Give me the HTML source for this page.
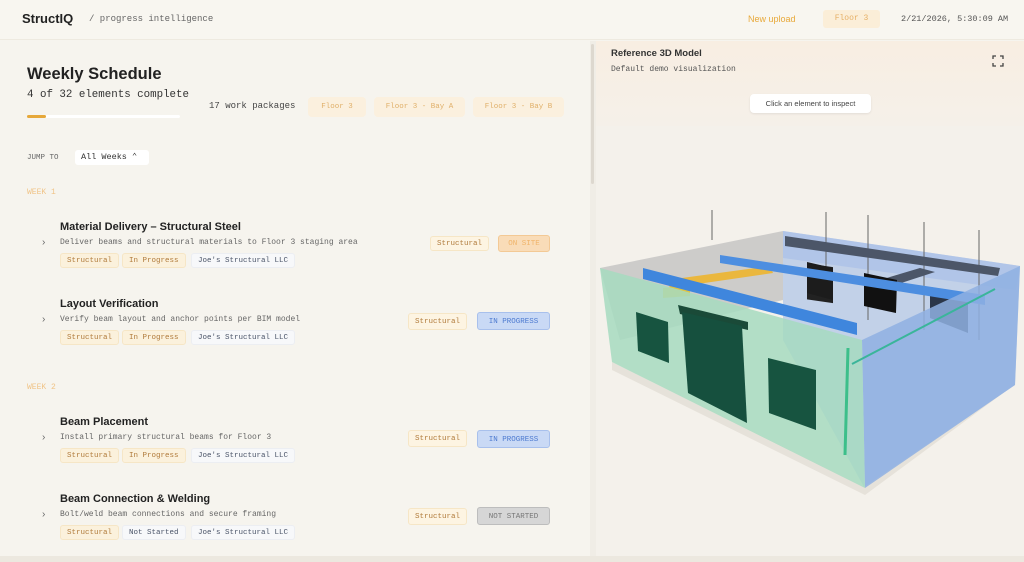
<!DOCTYPE html>
<html><head><style>
*{margin:0;padding:0;box-sizing:border-box}
body{width:1024px;height:562px;overflow:hidden;background:#f6f4ee;font-family:"Liberation Sans",sans-serif;position:relative;color:#222}
.a{position:absolute;white-space:nowrap}
.m{font-family:"Liberation Mono",monospace}
.tag{position:absolute;height:15px;line-height:15px;padding:0 6px;font-family:"Liberation Mono",monospace;font-size:7.5px;border-radius:3px}
.ty{background:#fbf1dc;color:#b07a3a;border:1px solid #f6e6c6}
.tw{background:#f7f8fa;color:#4a5468;border:1px solid #eceef2}
.t1{font-weight:bold;font-size:11px;color:#222}
.d{font-family:"Liberation Mono",monospace;font-size:8px;color:#666}
.chev{font-size:10px;color:#666}
.hdr{font-family:"Liberation Mono",monospace;font-size:9px;color:#b28a4a}
</style></head><body>
<div class="a" style="left:0;top:0;width:1024px;height:40px;background:#f8f6f0;border-bottom:1px solid #eeeae0"></div>
<div class="a" style="left:22px;top:11px;font-weight:bold;font-size:13px;color:#222">StructIQ</div>
<div class="a m" style="left:89px;top:14px;font-size:9px;color:#666">/ progress intelligence</div>
<div class="a" style="left:748px;top:14px;font-size:9px;color:#e8a93a">New upload</div>
<div class="a m" style="left:823px;top:10px;width:57px;height:18px;background:#fbeed8;border-radius:3px;color:#e6b066;font-size:8px;line-height:18px;text-align:center">Floor 3</div>
<div class="a m" style="left:901px;top:14px;font-size:8.5px;color:#555">2/21/2026, 5:30:09 AM</div>

<div class="a" style="left:590px;top:41px;width:6px;height:520px;background:#f0ede6"></div>
<div class="a" style="left:591px;top:44px;width:3px;height:140px;background:#ddd8cf;border-radius:2px"></div>
<div class="a" style="left:0;top:556px;width:1024px;height:6px;background:#ece8df"></div>

<div class="a" style="left:27px;top:65px;font-weight:bold;font-size:16.5px;color:#222">Weekly Schedule</div>
<div class="a m" style="left:27px;top:89px;font-size:10.8px;color:#333">4 of 32 elements complete</div>
<div class="a" style="left:27px;top:115px;width:153px;height:3px;background:#fff;border-radius:2px"></div>
<div class="a" style="left:27px;top:115px;width:19px;height:3px;background:#e6a83a;border-radius:2px"></div>
<div class="a m" style="left:209px;top:101px;font-size:9px;color:#444">17 work packages</div>
<div class="a m" style="left:308px;top:97px;width:58px;height:20px;line-height:20px;text-align:center;background:#fbf0de;border-radius:4px;color:#e0b06a;font-size:7.5px">Floor 3</div>
<div class="a m" style="left:374px;top:97px;width:91px;height:20px;line-height:20px;text-align:center;background:#fbf0de;border-radius:4px;color:#e0b06a;font-size:7.5px">Floor 3 - Bay A</div>
<div class="a m" style="left:473px;top:97px;width:91px;height:20px;line-height:20px;text-align:center;background:#fbf0de;border-radius:4px;color:#e0b06a;font-size:7.5px">Floor 3 - Bay B</div>

<div class="a m" style="left:27px;top:154px;font-size:7.5px;color:#666">JUMP TO</div>
<div class="a m" style="left:75px;top:150px;width:74px;height:15px;line-height:15px;padding-left:6px;background:#fff;border-radius:3px;font-size:8.5px;color:#333">All Weeks ⌃</div>

<div class="a hdr" style="left:27px;top:188px;font-size:8px;color:#f0c488">WEEK 1</div>

<div class="a t1" style="left:60px;top:221px">Material Delivery – Structural Steel</div>
<div class="a chev" style="left:42px;top:237px">›</div>
<div class="a d" style="left:60px;top:238px">Deliver beams and structural materials to Floor 3 staging area</div>
<div class="tag ty" style="left:60px;top:253px">Structural</div>
<div class="tag ty" style="left:122px;top:253px">In Progress</div>
<div class="tag tw" style="left:191px;top:253px">Joe's Structural LLC</div>
<div class="tag ty" style="left:430px;top:236px;background:#fdf4e2">Structural</div>
<div class="tag" style="left:498px;top:235px;width:52px;height:17px;line-height:17px;text-align:center;background:#f9dcb8;color:#f0b46a;border:1px solid #f3c995">ON SITE</div>

<div class="a t1" style="left:60px;top:298px">Layout Verification</div>
<div class="a chev" style="left:42px;top:314px">›</div>
<div class="a d" style="left:60px;top:315px">Verify beam layout and anchor points per BIM model</div>
<div class="tag ty" style="left:60px;top:330px">Structural</div>
<div class="tag ty" style="left:122px;top:330px">In Progress</div>
<div class="tag tw" style="left:191px;top:330px">Joe's Structural LLC</div>
<div class="tag ty" style="left:408px;top:313px;height:17px;line-height:17px;background:#fdf4e2">Structural</div>
<div class="tag" style="left:477px;top:312px;width:73px;height:18px;line-height:18px;text-align:center;background:#c9d9f5;color:#4d7ad0;border:1px solid #a8c0ec">IN PROGRESS</div>

<div class="a hdr" style="left:27px;top:383px;font-size:8px;color:#f0c488">WEEK 2</div>

<div class="a t1" style="left:60px;top:416px">Beam Placement</div>
<div class="a chev" style="left:42px;top:432px">›</div>
<div class="a d" style="left:60px;top:433px">Install primary structural beams for Floor 3</div>
<div class="tag ty" style="left:60px;top:448px">Structural</div>
<div class="tag ty" style="left:122px;top:448px">In Progress</div>
<div class="tag tw" style="left:191px;top:448px">Joe's Structural LLC</div>
<div class="tag ty" style="left:408px;top:430px;height:17px;line-height:17px;background:#fdf4e2">Structural</div>
<div class="tag" style="left:477px;top:430px;width:73px;height:18px;line-height:18px;text-align:center;background:#c9d9f5;color:#4d7ad0;border:1px solid #a8c0ec">IN PROGRESS</div>

<div class="a t1" style="left:60px;top:493px">Beam Connection &amp; Welding</div>
<div class="a chev" style="left:42px;top:509px">›</div>
<div class="a d" style="left:60px;top:510px">Bolt/weld beam connections and secure framing</div>
<div class="tag ty" style="left:60px;top:525px">Structural</div>
<div class="tag tw" style="left:122px;top:525px">Not Started</div>
<div class="tag tw" style="left:191px;top:525px">Joe's Structural LLC</div>
<div class="tag ty" style="left:408px;top:508px;height:17px;line-height:17px;background:#fdf4e2">Structural</div>
<div class="tag" style="left:477px;top:507px;width:73px;height:18px;line-height:18px;text-align:center;background:#d6d6d6;color:#777;border:1px solid #bdbdbd">NOT STARTED</div>

<!-- right panel -->
<div class="a" style="left:596px;top:41px;width:428px;height:515px;background:#f4f1eb"></div>
<div class="a" style="left:596px;top:41px;width:428px;height:85px;background:linear-gradient(#f8eee2,#f5f0e9)"></div>
<div class="a" style="left:611px;top:48px;font-weight:bold;font-size:9.5px;color:#333">Reference 3D Model</div>
<div class="a m" style="left:611px;top:65px;font-size:8px;color:#555">Default demo visualization</div>
<svg class="a" style="left:992px;top:55px" width="12" height="12" viewBox="0 0 12 12" fill="none" stroke="#444" stroke-width="1.3"><path d="M1 4V1H4M8 1H11V4M11 8V11H8M4 11H1V8"/></svg>
<div class="a" style="left:750px;top:94px;width:121px;height:19px;background:#fff;border-radius:4px;box-shadow:0 1px 2px rgba(0,0,0,.08);font-size:7.5px;line-height:19px;text-align:center;color:#444">Click an element to inspect</div>

<svg class="a" style="left:0;top:0" width="1024" height="562">
<polygon points="612,370 865,495 1010,388 1012,380 864,487 612,362" fill="#e6e2da"/>
<polygon points="600,268 783,231 783,300 620,340" fill="#c9c8c6" opacity=".9"/>
<polygon points="783,231 1020,266 1015,385 864,487 783,340" fill="#bccde8" opacity=".9"/>
<polygon points="783,231 1020,266 1016,290 783,258" fill="#a9c0e8" opacity=".7"/>
<line x1="712" y1="210" x2="712" y2="240" stroke="#666" stroke-width="1"/>
<line x1="868" y1="215" x2="868" y2="320" stroke="#666"/>
<line x1="924" y1="222" x2="924" y2="330" stroke="#666"/>
<line x1="979" y1="230" x2="979" y2="340" stroke="#666"/>
<line x1="826" y1="212" x2="826" y2="270" stroke="#666"/>
<polygon points="785,236 1000,268 998,276 785,246" fill="#4c5668"/>
<polygon points="880,280 920,268 935,272 895,285" fill="#4c5668"/>
<rect x="807" y="262" width="26" height="36" fill="#222" transform="skewY(8) translate(0,-112)"/>
<polygon points="807,262 833,268 833,300 807,293" fill="#1c1c1c"/>
<polygon points="864,273 897,280 896,313 864,306" fill="#111"/>
<polygon points="930,287 968,293 968,333 930,318" fill="#2b3648"/>
<polygon points="667,280 770,266 773,273 670,288" fill="#eab73e"/>
<polygon points="663,288 690,285 690,296 663,298" fill="#e2c440"/>
<polygon points="720,255 985,295 985,305 720,263" fill="#4d8ee0"/>
<polygon points="643,268 857,323 857,335 643,279" fill="#3f86dd"/>
<polygon points="862,340 1020,266 1015,385 865,488" fill="#8fb0e2" opacity=".85"/>
<polygon points="600,268 862,340 865,488 612,362" fill="#a6dbc0" opacity=".85"/>
<polygon points="636,312 668,322 669,363 638,351" fill="#175440"/>
<polygon points="678,305 748,322 748,330 680,314" fill="#1a4a38"/>
<polygon points="682,312 742,326 747,423 688,393" fill="#16503e"/>
<polygon points="768,358 816,370 816,430 769,413" fill="#175440"/>
<line x1="848" y1="348" x2="845" y2="455" stroke="#3cbf8a" stroke-width="3"/>
<line x1="852" y1="364" x2="995" y2="289" stroke="#3ab59a" stroke-width="2"/>
</svg>
</body></html>
